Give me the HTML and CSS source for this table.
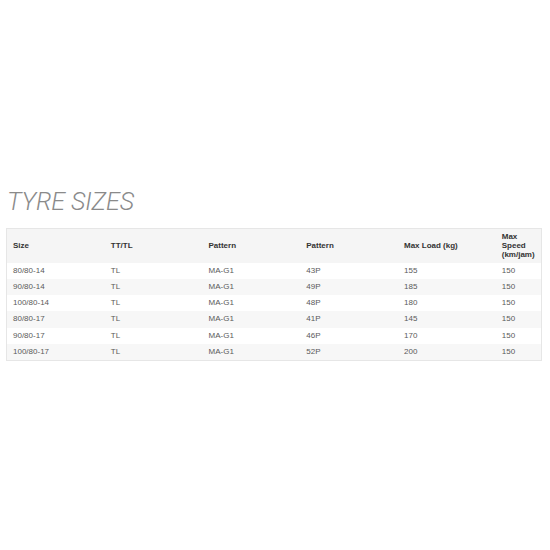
FILE: index.html
```html
<!DOCTYPE html>
<html>
<head>
<meta charset="utf-8">
<link rel="stylesheet" href="styles.css">
</head>
<body>
<div class="page">
  <h2 class="title">TYRE SIZES</h2>
  <table class="sizes">
    <thead>
      <tr>
        <th class="c">Size</th>
        <th class="c">TT/TL</th>
        <th class="c">Pattern</th>
        <th class="c">Pattern</th>
        <th class="c">Max Load (kg)</th>
        <th class="last">Max<br>Speed<br>(km/jam)</th>
      </tr>
    </thead>
    <tbody>
      <tr><td>80/80-14</td><td>TL</td><td>MA-G1</td><td>43P</td><td>155</td><td>150</td></tr>
      <tr><td>90/80-14</td><td>TL</td><td>MA-G1</td><td>49P</td><td>185</td><td>150</td></tr>
      <tr><td>100/80-14</td><td>TL</td><td>MA-G1</td><td>48P</td><td>180</td><td>150</td></tr>
      <tr><td>80/80-17</td><td>TL</td><td>MA-G1</td><td>41P</td><td>145</td><td>150</td></tr>
      <tr><td>90/80-17</td><td>TL</td><td>MA-G1</td><td>46P</td><td>170</td><td>150</td></tr>
      <tr><td>100/80-17</td><td>TL</td><td>MA-G1</td><td>52P</td><td>200</td><td>150</td></tr>
    </tbody>
  </table>
</div>
</body>
</html>
```
FILE: styles.css
```css
html, body {
  margin: 0;
  padding: 0;
  background: #ffffff;
}
.page {
  padding: 185.5px 0 0 6px;
}
.title {
  margin: 0 0 10.5px 1px;
  font-family: Roboto, "Liberation Sans", sans-serif;
  font-weight: 300;
  font-style: italic;
  font-size: 25px;
  line-height: 32px;
  color: #8a8a8a;
  letter-spacing: -0.1px;
}
.sizes {
  width: 536px;
  border-collapse: collapse;
  border: 1px solid #e6e6e6;
  font-family: "Liberation Sans", Arial, sans-serif;
  font-size: 8px;
  table-layout: fixed;
}
.sizes th {
  background: #f5f5f5;
  color: #333333;
  font-weight: bold;
  text-align: left;
  vertical-align: middle;
  line-height: 9px;
  padding: 3px 6px 3.5px;
}
.sizes th.c {
  width: 85.75px;
}
.sizes td {
  color: #5a5a5a;
  text-align: left;
  line-height: 8.33px;
  padding: 4px 6px;
}
.sizes tbody tr:nth-child(even) td {
  background: #f7f7f7;
}
```
